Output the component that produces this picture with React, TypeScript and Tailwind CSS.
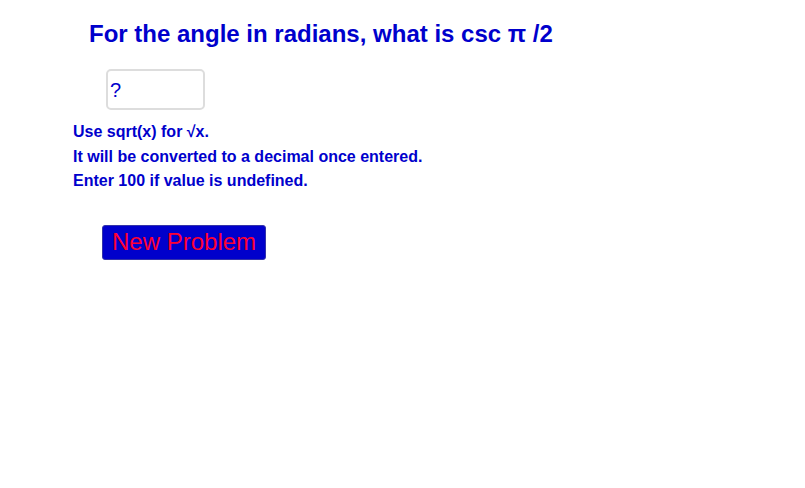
export default function App() {
  return (
    <div className="w-[805px] h-[488px] bg-white overflow-hidden font-['Liberation_Sans',Arial,sans-serif] text-[#0000cc]">
      <div className="pt-[20px] pl-[89px] text-[24px] leading-[28px] font-bold">
        For the angle in radians, what is csc π /2
      </div>

      <div className="ml-[106px] mt-[21px] w-[99px] h-[41px] border-2 border-[#dddddd] rounded-[5px] flex items-center pl-[2px] text-[20px] leading-none">
        ?
      </div>

      <div className="mt-[10px] pl-[73px] text-[16px] leading-[24.5px] font-bold">
        <p>Use sqrt(x) for √x.</p>
        <p>It will be converted to a decimal once entered.</p>
        <p>Enter 100 if value is undefined.</p>
      </div>

      <button className="ml-[102px] mt-[31px] w-[164px] h-[35px] bg-[#0000cc] border border-[#3333aa] rounded-[3px] text-[#ff0033] text-[24px] leading-none text-left pl-[9px] flex items-center">
        New Problem
      </button>
    </div>
  );
}
